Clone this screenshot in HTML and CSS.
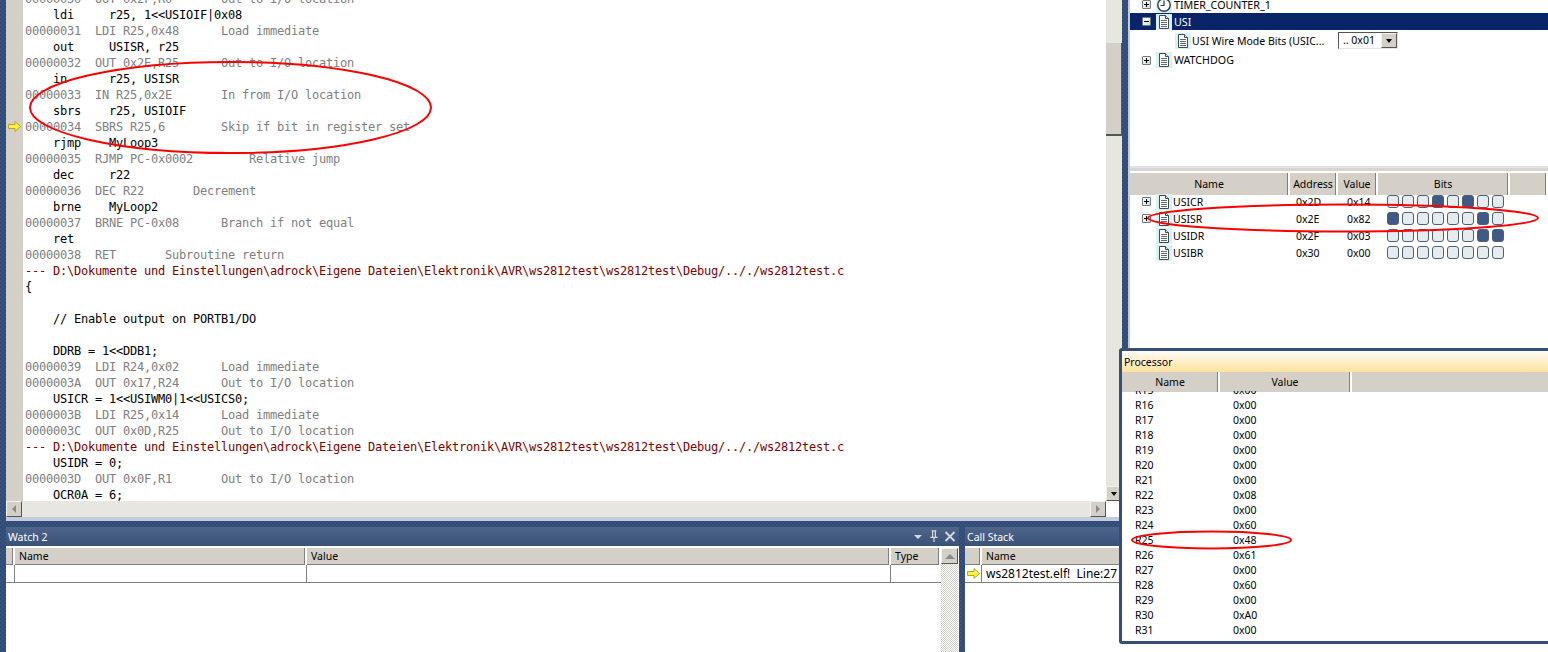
FILE: index.html
```html
<!DOCTYPE html>
<html lang="en">
<head>
<meta charset="utf-8">
<title>Atmel Studio debug session</title>
<link rel="stylesheet" href="styles.css">
</head>
<body>
<svg class="defs" width="0" height="0" aria-hidden="true">
  <symbol id="doc" viewBox="0 0 16 16">
    <rect width="16" height="16" fill="#d8f1f1"/>
    <path d="M3.5 1.5h6l3 3v10h-9z" fill="#fff" stroke="#3c4a52"/>
    <path d="M9.5 1.5v3h3" fill="#e4e8e8" stroke="#3c4a52"/>
    <path d="M5 6.5h6M5 8.5h6M5 10.5h6M5 12.5h6" stroke="#5d6a72"/>
  </symbol>
  <symbol id="clock" viewBox="0 0 16 16">
    <rect width="16" height="16" fill="#d8f1f1"/>
    <circle cx="8" cy="8" r="6.2" fill="#fff" stroke="#2f3a42" stroke-width="1.4"/>
    <path d="M8 3.5V8.5H4.5" fill="none" stroke="#2f3a42" stroke-width="1.2"/>
  </symbol>
  <symbol id="arrow" viewBox="0 0 13 11">
    <path d="M.5 3.5h6.5V.5l5.5 5-5.5 5v-3H.5z" fill="#fbf04a" stroke="#bfa516"/>
  </symbol>
</svg>

<div class="app">
  <div class="main-col">
    <div class="editor">
      <div class="editor-body">
        <div class="gutter"><svg class="next-arrow"><use href="#arrow"/></svg></div>
<pre class="code"><span class="dis">00000030  OUT 0x2F,R0		Out to I/O location</span>
<span>    ldi     r25, 1&lt;&lt;USIOIF|0x08</span>
<span class="dis">00000031  LDI R25,0x48		Load immediate</span>
<span>    out     USISR, r25</span>
<span class="dis">00000032  OUT 0x2E,R25		Out to I/O location</span>
<span>    in      r25, USISR</span>
<span class="dis">00000033  IN R25,0x2E		In from I/O location</span>
<span>    sbrs    r25, USIOIF</span>
<span class="dis">00000034  SBRS R25,6		Skip if bit in register set</span>
<span>    rjmp    MyLoop3</span>
<span class="dis">00000035  RJMP PC-0x0002		Relative jump</span>
<span>    dec     r22</span>
<span class="dis">00000036  DEC R22		Decrement</span>
<span>    brne    MyLoop2</span>
<span class="dis">00000037  BRNE PC-0x08		Branch if not equal</span>
<span>    ret</span>
<span class="dis">00000038  RET		Subroutine return</span>
<span class="path">--- D:\Dokumente und Einstellungen\adrock\Eigene Dateien\Elektronik\AVR\ws2812test\ws2812test\Debug/.././ws2812test.c</span>
<span>{</span>

<span>    // Enable output on PORTB1/DO</span>

<span>    DDRB = 1&lt;&lt;DDB1;</span>
<span class="dis">00000039  LDI R24,0x02		Load immediate</span>
<span class="dis">0000003A  OUT 0x17,R24		Out to I/O location</span>
<span>    USICR = 1&lt;&lt;USIWM0|1&lt;&lt;USICS0;</span>
<span class="dis">0000003B  LDI R25,0x14		Load immediate</span>
<span class="dis">0000003C  OUT 0x0D,R25		Out to I/O location</span>
<span class="path">--- D:\Dokumente und Einstellungen\adrock\Eigene Dateien\Elektronik\AVR\ws2812test\ws2812test\Debug/.././ws2812test.c</span>
<span>    USIDR = 0;</span>
<span class="dis">0000003D  OUT 0x0F,R1		Out to I/O location</span>
<span>    OCR0A = 6;</span></pre>
        <div class="vscroll">
          <div class="track track-top"></div>
          <div class="thumb"></div>
          <div class="track track-bottom"></div>
          <div class="sbtn"><i class="tri down"></i></div>
        </div>
      </div>
      <div class="hscroll">
        <div class="sbtn hbtn"><i class="tri left"></i></div>
        <div class="htrack"></div>
        <div class="sbtn hbtn"><i class="tri right"></i></div>
        <div class="corner"></div>
      </div>
    </div>
    <div class="strip"></div>
  </div>

  <div class="side-col">
    <div class="tree">
      <div class="node"><span class="exp plus"></span><svg class="ico"><use href="#clock"/></svg><span class="label tree-label">TIMER_COUNTER_1</span></div>
      <div class="node selected"><span class="exp minus"></span><svg class="ico"><use href="#doc"/></svg><span class="label tree-label">USI</span></div>
      <div class="node child">
        <svg class="ico"><use href="#doc"/></svg><span class="label child-label">USI Wire Mode Bits (USIC...</span>
        <div class="combo"><span class="combo-text">.. 0x01</span><span class="combo-btn"><i class="tri down"></i></span></div>
      </div>
      <div class="node last-node"><span class="exp plus"></span><svg class="ico"><use href="#doc"/></svg><span class="label tree-label">WATCHDOG</span></div>
    </div>
    <div class="splitter"></div>
    <div class="reg-list">
      <div class="reg-head">
        <div class="hcell">Name</div><div class="hcell">Address</div><div class="hcell">Value</div><div class="hcell">Bits</div><div class="hcell"></div>
      </div>
      <div class="reg-row">
        <div class="reg-name"><span class="exp plus"></span><svg class="ico"><use href="#doc"/></svg><span class="label">USICR</span></div>
        <div class="reg-val">0x2D</div><div class="reg-val">0x14</div>
        <div class="bits"><i></i><i></i><i></i><i class="on"></i><i></i><i class="on"></i><i></i><i></i></div>
      </div>
      <div class="reg-row">
        <div class="reg-name"><span class="exp plus"></span><svg class="ico"><use href="#doc"/></svg><span class="label">USISR</span></div>
        <div class="reg-val">0x2E</div><div class="reg-val">0x82</div>
        <div class="bits"><i class="on"></i><i></i><i></i><i></i><i></i><i></i><i class="on"></i><i></i></div>
      </div>
      <div class="reg-row">
        <div class="reg-name"><span class="exp none"></span><svg class="ico"><use href="#doc"/></svg><span class="label">USIDR</span></div>
        <div class="reg-val">0x2F</div><div class="reg-val">0x03</div>
        <div class="bits"><i></i><i></i><i></i><i></i><i></i><i></i><i class="on"></i><i class="on"></i></div>
      </div>
      <div class="reg-row">
        <div class="reg-name"><span class="exp none"></span><svg class="ico"><use href="#doc"/></svg><span class="label">USIBR</span></div>
        <div class="reg-val">0x30</div><div class="reg-val">0x00</div>
        <div class="bits"><i></i><i></i><i></i><i></i><i></i><i></i><i></i><i></i></div>
      </div>
    </div>
  </div>

  <div class="tool-row">
    <section class="tool watch">
      <header class="tool-title">
        <span class="tool-name">Watch 2</span>
        <i class="tri pane-menu"></i>
        <svg class="pane-btn" viewBox="0 0 12 14"><path d="M3.5 1h5M4.5 1v7M7.5 1v7M2 8h8M6 8v5" fill="none" stroke="#d5dbe6" stroke-width="1.3"/></svg>
        <svg class="pane-btn" viewBox="0 0 12 12"><path d="M1.5 1.5l9 9M10.5 1.5l-9 9" fill="none" stroke="#d5dbe6" stroke-width="1.8"/></svg>
      </header>
      <div class="grid-wrap">
        <div class="grid-main">
          <div class="watch-head">
            <div class="cell"></div><div class="cell">Name</div><div class="cell">Value</div><div class="cell">Type</div>
          </div>
          <div class="watch-row">
            <div class="rcell"></div><div class="rcell"></div><div class="rcell"></div><div class="rcell last"></div>
          </div>
        </div>
        <div class="watch-scroll">
          <div class="sbtn vbtn"><i class="tri up"></i></div>
        </div>
      </div>
    </section>
    <section class="tool stack">
      <header class="tool-title"><span class="tool-name">Call Stack</span></header>
      <div class="stack-head"><div class="cell"></div><div class="cell">Name</div></div>
      <div class="stack-row">
        <div class="rcell"><svg class="stack-arrow"><use href="#arrow"/></svg></div>
        <div class="rcell stack-text">ws2812test.elf!  Line:27</div>
      </div>
    </section>
  </div>
</div>

<section class="processor">
  <header class="proc-title">Processor</header>
  <div class="proc-head"><div class="hcell">Name</div><div class="hcell">Value</div><div class="hcell"></div></div>
  <div class="proc-rows">
    <div class="proc-row first"><span>R15</span><span>0x00</span></div>
    <div class="proc-row"><span>R16</span><span>0x00</span></div>
    <div class="proc-row"><span>R17</span><span>0x00</span></div>
    <div class="proc-row"><span>R18</span><span>0x00</span></div>
    <div class="proc-row"><span>R19</span><span>0x00</span></div>
    <div class="proc-row"><span>R20</span><span>0x00</span></div>
    <div class="proc-row"><span>R21</span><span>0x00</span></div>
    <div class="proc-row"><span>R22</span><span>0x08</span></div>
    <div class="proc-row"><span>R23</span><span>0x00</span></div>
    <div class="proc-row"><span>R24</span><span>0x60</span></div>
    <div class="proc-row"><span>R25</span><span>0x48</span></div>
    <div class="proc-row"><span>R26</span><span>0x61</span></div>
    <div class="proc-row"><span>R27</span><span>0x00</span></div>
    <div class="proc-row"><span>R28</span><span>0x60</span></div>
    <div class="proc-row"><span>R29</span><span>0x00</span></div>
    <div class="proc-row"><span>R30</span><span>0xA0</span></div>
    <div class="proc-row"><span>R31</span><span>0x00</span></div>
  </div>
</section>

<svg class="marks" viewBox="0 0 1548 652" aria-hidden="true">
  <ellipse cx="230.500" cy="107.500" rx="200.500" ry="45.500"/>
  <ellipse cx="1343" cy="218" rx="195" ry="13.500"/>
  <ellipse cx="1211.500" cy="540" rx="79.500" ry="8.500"/>
</svg>
</body>
</html>
```

FILE: styles.css
```css
* { box-sizing: border-box; }
html, body { margin: 0; height: 652px; overflow: hidden; }
body {
  position: relative;
  width: 1548px;
  background: #fff;
  color: #000;
  font: 10.500px "Noto Sans", "Liberation Sans", sans-serif;
}
.defs { position: absolute; }
i { display: block; font-style: normal; }

.app {
  display: grid;
  grid-template-columns: 1122px 426px;
  grid-template-rows: 527px 125px;
  height: 652px;
  background: repeating-conic-gradient(#2f4a73 0 25%, #38537d 0 50%) 0 0 / 4px 4px;
}

/* ---------- editor ---------- */
.main-col { display: flex; flex-direction: column; padding-left: 6px; min-width: 0; }
.editor { flex: none; height: 517px; display: flex; flex-direction: column; background: #fff; }
.editor-body { flex: none; height: 501px; display: flex; overflow: hidden; }
.gutter { position: relative; flex: none; width: 17px; background: #d4d0c8; }
.next-arrow { position: absolute; left: 2px; top: 121px; width: 13px; height: 11px; }
.code {
  flex: 1;
  min-width: 0;
  margin: -9px 0 0;
  padding-left: 2px;
  overflow: hidden;
  font: 12px/16px "DejaVu Sans Mono", monospace;
  letter-spacing: -0.224px;
  tab-size: 4;
  white-space: pre;
  color: #000;
}
.dis { color: #808080; }
.path { color: #800000; }

.vscroll { flex: none; width: 16px; display: flex; flex-direction: column; background: #e8e6e1; }
.track { background: #e8e6e1; }
.track-top { height: 43px; }
.track-bottom { flex: 1; }
.thumb { height: 93px; background: #d4d0c8; border-right: 1px solid #555; border-bottom: 2px solid #555; }
.sbtn {
  flex: none;
  height: 15px;
  display: flex;
  align-items: center;
  justify-content: center;
  background: #d4d0c8;
  border: 1px solid;
  border-color: #f4f2ec #555 #555 #f4f2ec;
}
.tri { width: 0; height: 0; border-style: solid; border-color: transparent; }
.tri.down { border-width: 4px 3.500px 0; border-top-color: #000; }
.tri.up { border-width: 0 5px 5px; border-bottom-color: #8a8a86; }
.tri.left { border-width: 4px 4px 4px 0; border-right-color: #8a8a86; }
.tri.right { border-width: 4px 0 4px 4px; border-left-color: #8a8a86; }

.hscroll { flex: 1; display: flex; background: #e8e6e1; }
.hbtn { width: 16px; height: 16px; }
.htrack { flex: 1; }
.corner { flex: none; width: 16px; background: #fff; }

.strip { flex: none; height: 4px; background: #c3cbdc; }

/* ---------- tool windows ---------- */
.tool-row { grid-column: 1 / -1; display: flex; gap: 6px; padding-left: 6px; min-height: 0; }
.tool { background: #fff; display: flex; flex-direction: column; }
.watch { flex: none; width: 953px; }
.stack { flex: 1; min-width: 0; }
.tool-title {
  flex: none;
  height: 19px;
  margin-bottom: 2px;
  padding: 0 3px 0 2px;
  display: flex;
  align-items: center;
  gap: 3px;
  color: #fff;
  background: linear-gradient(#4f658a, #3a5178);
}
.tool-name { flex: 1; }
.pane-menu { border-width: 4px 4px 0; border-top-color: #d5dbe6; margin-right: 2px; }
.pane-btn { width: 12px; height: 13px; margin-left: 1px; }

.grid-wrap { flex: 1; display: flex; min-height: 0; padding-right: 1px; }
.grid-main { flex: 1; min-width: 0; }
.watch-head, .watch-row { display: grid; grid-template-columns: 9px 292px 584px 50px; }
.watch-head { height: 17px; background: #d4d0c8; border-bottom: 1px solid #808080; }
.watch-row, .stack-row { height: 18px; border-bottom: 1px solid #808080; }
.cell { padding-left: 4px; line-height: 17px; border-right: 2px solid #fff; box-shadow: inset -1px 0 #808080; }
.rcell { border-right: 1px solid #808080; }
.rcell.last { border-right: 0; }
.watch-scroll {
  flex: none;
  width: 17px;
  background: repeating-conic-gradient(#d4d0c8 0 25%, #fff 0 50%) 0 0 / 2px 2px;
}
.vbtn { height: 16px; }

.stack-head, .stack-row { display: grid; grid-template-columns: 17px 1fr; }
.stack-head { height: 17px; background: #d4d0c8; border-bottom: 1px solid #808080; }
.stack-row { align-items: center; font-size: 12px; }
.stack-row .rcell { height: 17px; }
.stack-arrow { display: block; width: 13px; height: 11px; margin: 3px 0 0 2px; }
.stack-text { padding-left: 4px; border: 0; line-height: 17px; white-space: pre; }

/* ---------- side panes ---------- */
.side-col {
  display: flex;
  flex-direction: column;
  padding-left: 8px;
  min-width: 0;
}
.tree {
  flex: none;
  height: 166px;
  overflow: hidden;
  background: #fff;
  box-shadow: -2px 0 #c3cbdc;
}
.node {
  height: 17px;
  display: flex;
  align-items: center;
  padding-left: 12px;
  white-space: nowrap;
}
.node:first-child { margin-top: -4px; }
.node.selected { background: #0a246a; color: #fff; }
.node.child { height: 21px; padding-left: 45px; }
.node.last-node { height: 18px; }
.exp {
  flex: none;
  position: relative;
  width: 9px;
  height: 9px;
  margin-right: 5px;
  background: linear-gradient(135deg, #fff, #d8d8d0);
  border: 1px solid #6e7a86;
  border-radius: 1px;
}
.exp::before {
  content: "";
  position: absolute;
  left: 1px;
  top: 3px;
  width: 5px;
  height: 1px;
  background: #000;
}
.exp.plus::after {
  content: "";
  position: absolute;
  left: 3px;
  top: 1px;
  width: 1px;
  height: 5px;
  background: #000;
}
.exp.none { visibility: hidden; }
.ico { flex: none; width: 16px; height: 16px; }
.label { margin-left: 1px; }
.tree-label { margin-left: 2px; font-size: 10.700px; }
.child-label { width: 146px; }
.combo {
  width: 60px;
  height: 17px;
  display: flex;
  background: #fff;
  border: 1px solid;
  border-color: #555 #e8e6e1 #e8e6e1 #555;
}
.combo-text { flex: 1; padding-left: 4px; line-height: 15px; }
.combo-btn {
  flex: none;
  width: 16px;
  display: flex;
  align-items: center;
  justify-content: center;
  background: #d4d0c8;
  border: 1px solid;
  border-color: #f4f2ec #555 #555 #f4f2ec;
}

.splitter {
  flex: none;
  height: 7px;
  background: linear-gradient(#dfe2ea 0 2px, #d9d4cc 2px 5px, #fff 5px);
  box-shadow: -2px 0 #c3cbdc;
}
.reg-list { flex: 1; background: #fff; box-shadow: -2px 0 #c3cbdc; }
.reg-head {
  display: grid;
  grid-template-columns: 160px 48px 40px 132px 1fr;
  height: 20px;
  border-bottom: 1px solid #444;
}
.hcell {
  background: #d4d0c8;
  border-right: 2px solid #fff;
  box-shadow: inset -1px 0 #808080;
  text-align: center;
  line-height: 22px;
}
.reg-row {
  display: grid;
  grid-template-columns: 160px 48px 40px 132px;
  height: 17px;
  align-items: center;
}
.reg-name { display: flex; align-items: center; padding-left: 12px; }
.reg-val { padding-left: 6px; }
.reg-val + .reg-val { padding-left: 9px; }
.bits { display: flex; gap: 3px; padding-left: 9px; }
.bits i {
  width: 12px;
  height: 13px;
  background: #e6ebef;
  border: 1px solid #4f5f74;
  border-radius: 3px;
}
.bits i.on { background: #3f5a87; }

/* ---------- floating processor window ---------- */
.processor {
  position: absolute;
  left: 1119px;
  top: 348px;
  width: 440px;
  height: 296px;
  display: flex;
  flex-direction: column;
  background: #fff;
  border: 3px solid #34507a;
  border-radius: 3px 0 0 3px;
  overflow: hidden;
}
.proc-title {
  flex: none;
  height: 21px;
  padding: 3px 0 0 2px;
  line-height: 17px;
  background: linear-gradient(#fffdf6, #fde29c);
}
.proc-head {
  flex: none;
  display: grid;
  grid-template-columns: 98px 132px 1fr;
  height: 19px;
  border-bottom: 1px solid #444;
}
.proc-head .hcell { line-height: 20px; }
.proc-rows { flex: 1; min-height: 0; overflow: hidden; }
.proc-row { display: grid; grid-template-columns: 98px 1fr; height: 15px; line-height: 15px; padding-left: 13px; }
.proc-row.first { margin-top: -8px; }

/* ---------- hand-drawn annotations ---------- */
.marks { position: absolute; left: 0; top: 0; width: 1548px; height: 652px; pointer-events: none; }
.marks ellipse { fill: none; stroke: #f00; stroke-width: 2; }
```
